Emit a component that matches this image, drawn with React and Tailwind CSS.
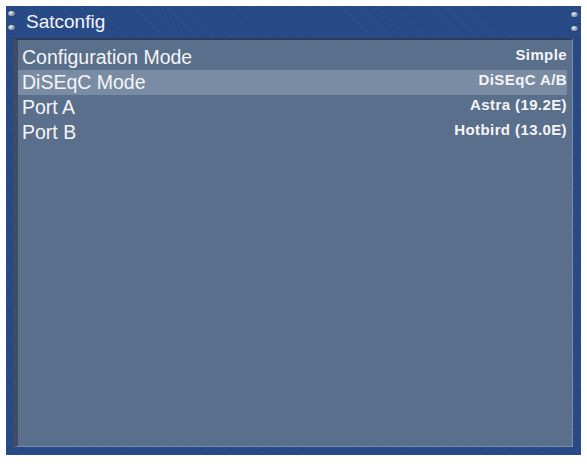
import React from "react";

const rows = [
  { label: "Configuration Mode", value: "Simple" },
  { label: "DiSEqC Mode", value: "DiSEqC A/B", selected: true },
  { label: "Port A", value: "Astra (19.2E)" },
  { label: "Port B", value: "Hotbird (13.0E)" },
];

function Screw() {
  return (
    <div className="w-[7px] h-[5px] rounded-full bg-[radial-gradient(circle_at_40%_35%,#eef2f7_0%,#a4aebc_40%,#4d596b_100%)] shadow-[0_0_1px_#0a1a3a]" />
  );
}

export default function App() {
  return (
    <div className="w-[587px] h-[464px] bg-white pt-[6px] pl-[6px]" style={{ fontFamily: '"Liberation Sans", Arial, sans-serif' }}>
      <div className="w-[575px] h-[449px] flex flex-col bg-[#264885] bg-[repeating-linear-gradient(45deg,rgba(255,255,255,0.03)_0px,rgba(255,255,255,0.03)_1px,transparent_1px,transparent_3px)]">
        <div className="h-[32px] flex items-start px-[2px]">
          <div className="w-[7px] flex flex-col gap-[9px] pt-[5px]">
            <Screw />
            <Screw />
          </div>
          <div className="pl-[11px] pt-[6px] text-[19px] leading-[20px] text-[#f2f4f8]">Satconfig</div>
          <div className="flex-1" />
          <div className="w-[7px] flex flex-col gap-[9px] pt-[6px] mr-[1px]">
            <Screw />
            <Screw />
          </div>
        </div>
        <div className="flex-1 ml-[7px] mr-[8px] mb-[8px] bg-[#5a6f8b] border-l-[5px] border-l-[#3e4d64] border-t-2 border-t-[#2c3d5c] border-r border-r-[#7e90aa] border-b border-b-[#7a8ca6] pt-[5px]">
          {rows.map((r) => (
            <div
              key={r.label}
              className={
                "h-[25px] mr-[5px] pl-[4px] flex justify-between items-start " +
                (r.selected ? "bg-[#7a8ba4]" : "")
              }
            >
              <span className="text-[19.5px] leading-[25px] text-[#f4f5f7]">{r.label}</span>
              <span className="pt-[1px] text-[15px] leading-[17px] font-bold tracking-[0.4px] text-[#f4f5f7]">{r.value}</span>
            </div>
          ))}
        </div>
      </div>
    </div>
  );
}
